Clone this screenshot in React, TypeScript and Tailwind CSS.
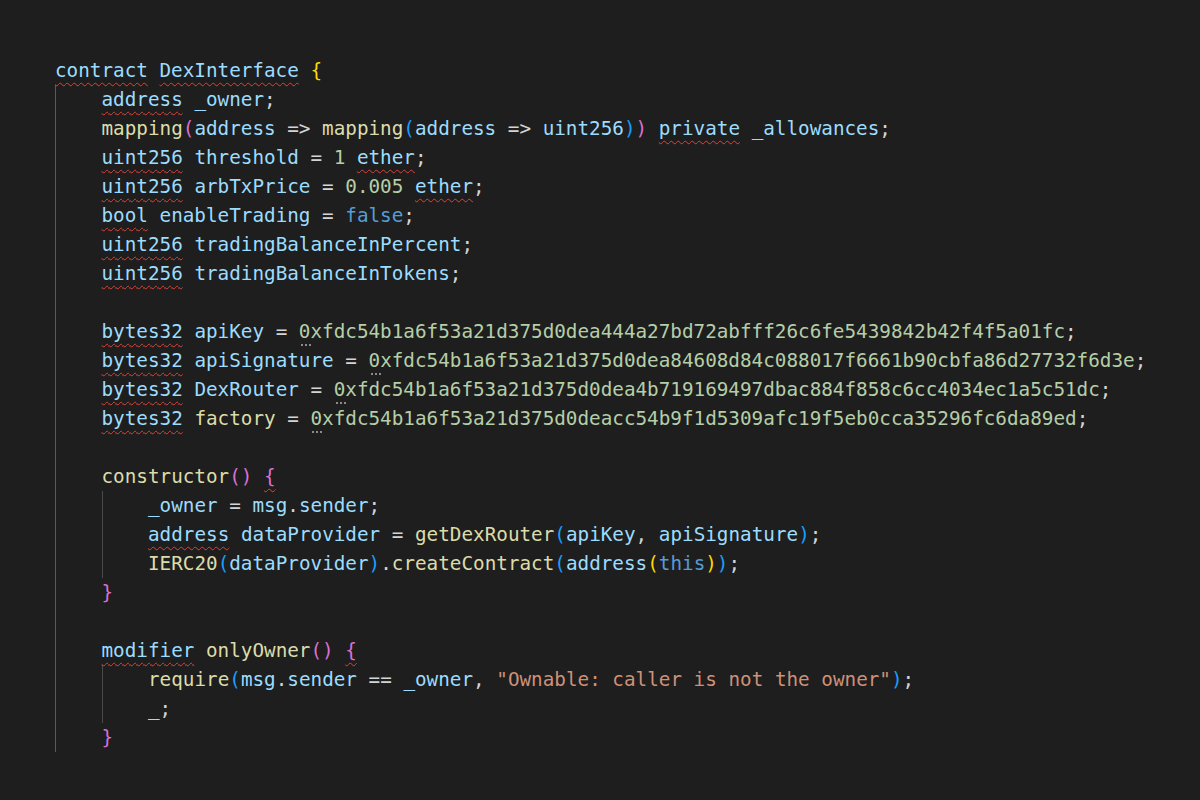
import React from "react";
import clsx from "clsx";

const kw = "text-[#9cdcfe]";
const bl = "text-[#569cd6]";
const fn = "text-[#dcdcaa]";
const num = "text-[#b5cea8]";
const str = "text-[#ce9178]";
const pun = "text-[#d4d4d4]";
const gold = "text-[#ffd700]";
const orc = "text-[#da70d6]";
const br = "text-[#179fff]";

const T = ({ c, sq, children }: { c: string; sq?: boolean; children: React.ReactNode }) => (
    <span
        className={clsx(
            c,
            sq && "underline decoration-wavy decoration-[#d8443c] decoration-1 underline-offset-[5px]"
        )}
    >
        {children}
    </span>
);

// hex literal with the little hint dots under the first character
const Hex = ({ v }: { v: string }) => (
    <span className={num}>
        <span className="relative">
            0
            <span className="absolute left-[2px] bottom-[-3px] flex gap-[2px]">
                <span className="w-[2px] h-[2px] rounded-full bg-[#b0b0b0]"></span>
                <span className="w-[2px] h-[2px] rounded-full bg-[#b0b0b0]"></span>
                <span className="w-[2px] h-[2px] rounded-full bg-[#b0b0b0]"></span>
            </span>
        </span>
        {v.slice(1)}
    </span>
);

const Line = ({ children }: { children?: React.ReactNode }) => (
    <div className="h-[29px] whitespace-pre">{children}</div>
);

const Block = ({ guide, children }: { guide: string; children: React.ReactNode }) => (
    <div className={clsx("border-l pl-[45.5px]", guide)}>{children}</div>
);

const App = () => {
    return (
        <div
            className="w-full h-[800px] overflow-hidden bg-[#1e1e1e] pl-[55px] pt-[56px] text-[19.3px] leading-[29px] text-[#d4d4d4]"
            style={{ fontFamily: '"DejaVu Sans Mono", "Liberation Mono", monospace' }}
        >
            <Line>
                <T c={kw} sq>contract</T> <T c={kw} sq>DexInterface</T> <T c={gold}>{"{"}</T>
            </Line>
            <Block guide="border-[#5a5a5a]">
                <Line>
                    <T c={kw} sq>address</T> <T c={kw}>_owner</T><T c={pun}>;</T>
                </Line>
                <Line>
                    <T c={fn}>mapping</T><T c={orc}>(</T><T c={kw}>address</T> <T c={pun}>{"=>"}</T>{" "}
                    <T c={fn}>mapping</T><T c={br}>(</T><T c={kw}>address</T> <T c={pun}>{"=>"}</T>{" "}
                    <T c={kw}>uint256</T><T c={br}>)</T><T c={orc}>)</T> <T c={kw} sq>private</T>{" "}
                    <T c={kw}>_allowances</T><T c={pun}>;</T>
                </Line>
                <Line>
                    <T c={kw} sq>uint256</T> <T c={kw}>threshold</T> <T c={pun}>=</T> <T c={num}>1</T>{" "}
                    <T c={kw} sq>ether</T><T c={pun}>;</T>
                </Line>
                <Line>
                    <T c={kw} sq>uint256</T> <T c={kw}>arbTxPrice</T> <T c={pun}>=</T> <T c={num}>0.005</T>{" "}
                    <T c={kw} sq>ether</T><T c={pun}>;</T>
                </Line>
                <Line>
                    <T c={kw} sq>bool</T> <T c={kw}>enableTrading</T> <T c={pun}>=</T> <T c={bl}>false</T>
                    <T c={pun}>;</T>
                </Line>
                <Line>
                    <T c={kw} sq>uint256</T> <T c={kw}>tradingBalanceInPercent</T><T c={pun}>;</T>
                </Line>
                <Line>
                    <T c={kw} sq>uint256</T> <T c={kw}>tradingBalanceInTokens</T><T c={pun}>;</T>
                </Line>
                <Line />
                <Line>
                    <T c={kw} sq>bytes32</T> <T c={kw}>apiKey</T> <T c={pun}>=</T>{" "}
                    <Hex v="0xfdc54b1a6f53a21d375d0dea444a27bd72abfff26c6fe5439842b42f4f5a01fc" />
                    <T c={pun}>;</T>
                </Line>
                <Line>
                    <T c={kw} sq>bytes32</T> <T c={kw}>apiSignature</T> <T c={pun}>=</T>{" "}
                    <Hex v="0xfdc54b1a6f53a21d375d0dea84608d84c088017f6661b90cbfa86d27732f6d3e" />
                    <T c={pun}>;</T>
                </Line>
                <Line>
                    <T c={kw} sq>bytes32</T> <T c={kw}>DexRouter</T> <T c={pun}>=</T>{" "}
                    <Hex v="0xfdc54b1a6f53a21d375d0dea4b719169497dbac884f858c6cc4034ec1a5c51dc" />
                    <T c={pun}>;</T>
                </Line>
                <Line>
                    <T c={kw} sq>bytes32</T> <T c={fn}>factory</T> <T c={pun}>=</T>{" "}
                    <Hex v="0xfdc54b1a6f53a21d375d0deacc54b9f1d5309afc19f5eb0cca35296fc6da89ed" />
                    <T c={pun}>;</T>
                </Line>
                <Line />
                <Line>
                    <T c={fn}>constructor</T><T c={orc}>()</T> <T c={orc} sq>{"{"}</T>
                </Line>
                <Block guide="border-[#4a4a4a]">
                    <Line>
                        <T c={kw}>_owner</T> <T c={pun}>=</T> <T c={kw}>msg</T><T c={pun}>.</T><T c={kw}>sender</T>
                        <T c={pun}>;</T>
                    </Line>
                    <Line>
                        <T c={kw} sq>address</T> <T c={kw}>dataProvider</T> <T c={pun}>=</T>{" "}
                        <T c={fn}>getDexRouter</T><T c={br}>(</T><T c={kw}>apiKey</T><T c={pun}>,</T>{" "}
                        <T c={kw}>apiSignature</T><T c={br}>)</T><T c={pun}>;</T>
                    </Line>
                    <Line>
                        <T c={fn}>IERC20</T><T c={br}>(</T><T c={kw}>dataProvider</T><T c={br}>)</T>
                        <T c={pun}>.</T><T c={fn}>createContract</T><T c={br}>(</T><T c={kw}>address</T>
                        <T c={gold}>(</T><T c={bl}>this</T><T c={gold}>)</T><T c={br}>)</T><T c={pun}>;</T>
                    </Line>
                </Block>
                <Line>
                    <T c={orc}>{"}"}</T>
                </Line>
                <Line />
                <Line>
                    <T c={kw} sq>modifier</T> <T c={fn}>onlyOwner</T><T c={orc}>()</T> <T c={orc} sq>{"{"}</T>
                </Line>
                <Block guide="border-[#4a4a4a]">
                    <Line>
                        <T c={fn}>require</T><T c={br}>(</T><T c={kw}>msg</T><T c={pun}>.</T><T c={kw}>sender</T>{" "}
                        <T c={pun}>==</T> <T c={kw}>_owner</T><T c={pun}>,</T>{" "}
                        <T c={str}>"Ownable: caller is not the owner"</T><T c={br}>)</T><T c={pun}>;</T>
                    </Line>
                    <Line>
                        <T c={kw}>_</T><T c={pun}>;</T>
                    </Line>
                </Block>
                <Line>
                    <T c={orc}>{"}"}</T>
                </Line>
            </Block>
        </div>
    );
};

export default App;
